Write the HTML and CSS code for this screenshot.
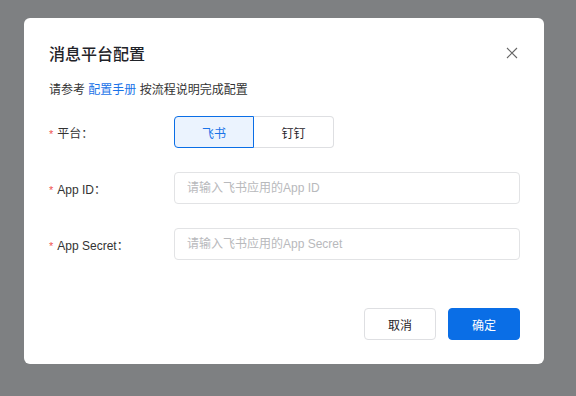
FILE: index.html
```html
<!DOCTYPE html>
<html lang="zh-CN">

<head>
    <meta charset="utf-8">
    <meta name="viewport" content="width=device-width, initial-scale=1.0">
    <title>消息平台配置</title>
    <link rel="stylesheet" href="styles.css">
</head>

<body>
    <div class="overlay">
        <div class="modal">
            <div class="modal-header">
                <h1>消息平台配置</h1>
                <button class="close" aria-label="关闭">
                    <svg width="12" height="12" viewBox="0 0 12 12">
                        <path d="M1 1L11 11M11 1L1 11" stroke="#666" stroke-width="1.1" fill="none" />
                    </svg>
                </button>
            </div>
            <p class="desc">请参考 <a href="#">配置手册</a> 按流程说明完成配置</p>
            <form class="form">
                <div class="form-row">
                    <label><span class="req">*</span>平台：</label>
                    <div class="segment">
                        <button type="button" class="seg-btn active">飞书</button>
                        <button type="button" class="seg-btn">钉钉</button>
                    </div>
                </div>
                <div class="form-row">
                    <label for="appId"><span class="req">*</span>App ID：</label>
                    <input id="appId" type="text" placeholder="请输入飞书应用的App ID">
                </div>
                <div class="form-row">
                    <label for="appSecret"><span class="req">*</span>App Secret：</label>
                    <input id="appSecret" type="text" placeholder="请输入飞书应用的App Secret">
                </div>
            </form>
            <div class="modal-footer">
                <button class="btn">取消</button>
                <button class="btn primary">确定</button>
            </div>
        </div>
    </div>
</body>

</html>
```

FILE: styles.css
```css
* {
    box-sizing: border-box;
    font-family: 'Liberation Sans', 'Noto Sans CJK SC', sans-serif;
}

body {
    margin: 0;
    background-color: #7e8082;
}

.overlay {
    width: 576px;
    height: 396px;
    padding: 18px 32px 0 24px;
}

.modal {
    width: 520px;
    background: #fff;
    border-radius: 6px;
    padding: 22px 24px 24px 24px;
}

.modal-header {
    display: flex;
    align-items: center;
    justify-content: space-between;
    height: 26px;
}

h1 {
    margin: 0;
    font-size: 16px;
    font-weight: 500;
    color: #1f2329;
    padding-left: 1px;
}

.close {
    border: none;
    background: none;
    padding: 0;
    width: 12px;
    height: 12px;
    margin-right: 2px;
    display: flex;
    cursor: pointer;
}

.desc {
    margin: 14px 0 0 1px;
    font-size: 12px;
    line-height: 20px;
    color: #333;
}

.desc a {
    color: #1a73e8;
    text-decoration: none;
}

.form {
    margin-top: 16px;
    display: flex;
    flex-direction: column;
    gap: 24px;
}

.form-row {
    display: flex;
    align-items: center;
    height: 32px;
}

.form-row label {
    width: 126px;
    flex-shrink: 0;
    font-size: 12px;
    color: #333;
    padding-left: 1px;
}

.req {
    color: #f0524f;
    font-size: 11px;
    margin-right: 4px;
}

.segment {
    display: flex;
}

.seg-btn {
    width: 80px;
    height: 32px;
    font-size: 12px;
    background: #fff;
    border: 1px solid #dedfe2;
    color: #1f2329;
    cursor: pointer;
}

.seg-btn:first-child {
    border-radius: 4px 0 0 4px;
}

.seg-btn:last-child {
    border-radius: 0 4px 4px 0;
    border-left: none;
}

.seg-btn.active {
    background: #ebf3fe;
    border-color: #0a6ee6;
    color: #1a73e8;
}

input {
    flex: 1;
    height: 32px;
    border: 1px solid #e2e3e5;
    border-radius: 4px;
    padding: 0 12px;
    font-size: 12px;
    color: #333;
    outline: none;
}

input::placeholder {
    color: #b8b9bc;
}

.modal-footer {
    display: flex;
    justify-content: flex-end;
    gap: 12px;
    margin-top: 48px;
}

.btn {
    width: 72px;
    height: 32px;
    border: 1px solid #dedfe2;
    border-radius: 4px;
    background: #fff;
    font-size: 12px;
    color: #1f2329;
    cursor: pointer;
}

.btn.primary {
    background: #0a6ee6;
    border-color: #0a6ee6;
    color: #fff;
}
```
